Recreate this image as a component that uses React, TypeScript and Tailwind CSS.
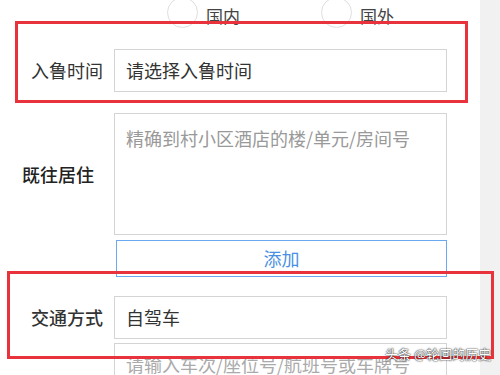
import React from "react";

const font = { fontFamily: '"Noto Sans CJK SC", "Noto Sans", sans-serif' };

export default function App() {
  return (
    <div
      className="relative flex w-[500px] h-[375px] overflow-hidden bg-white"
      style={font}
    >
      <div className="w-[480px] shrink-0 flex flex-col">
        {/* radio row */}
        <div className="shrink-0 mt-[-4px] h-[32px] flex items-center">
          <div className="ml-[167px] flex items-center">
            <span className="w-[31px] h-[31px] rounded-full border border-[#dedede]" />
            <span className="ml-[8px] text-[17px] leading-none text-[#444] mt-[6px]">国内</span>
          </div>
          <div className="ml-[81px] flex items-center">
            <span className="w-[31px] h-[31px] rounded-full border border-[#dedede]" />
            <span className="ml-[8px] text-[17px] leading-none text-[#444] mt-[6px]">国外</span>
          </div>
        </div>

        {/* 入鲁时间 */}
        <div className="shrink-0 mt-[21px] flex items-center">
          <div className="w-[114px] pr-[11px] text-right text-[18px] text-[#333]">入鲁时间</div>
          <div className="w-[333px] h-[43px] border border-[#d4d4d4] flex items-center pl-[11px] text-[18px] text-[#333]">
            请选择入鲁时间
          </div>
        </div>

        {/* 既往居住 */}
        <div className="shrink-0 mt-[21px] flex items-center">
          <div className="w-[114px] pl-[22px] text-[18px] font-medium text-[#222]">既往居住</div>
          <div className="w-[333px] h-[122px] border border-[#d4d4d4] pl-[11px] pt-[11px] text-[18px] leading-[26px] text-[#999]">
            精确到村小区酒店的楼/单元/房间号
          </div>
        </div>

        {/* 添加 */}
        <div className="shrink-0 mt-[5px] ml-[116px] w-[331px] h-[37px] border border-[#6aa8f0] flex items-center justify-center text-[18px] text-[#4a90e2]">
          添加
        </div>

        {/* 交通方式 */}
        <div className="shrink-0 mt-[19px] flex items-center">
          <div className="w-[114px] pr-[11px] text-right text-[18px] font-medium text-[#333]">交通方式</div>
          <div className="w-[333px] h-[43px] border border-[#d4d4d4] flex items-center pl-[11px] text-[18px] text-[#333]">
            自驾车
          </div>
        </div>

        <div className="shrink-0 mt-[4px] flex">
          <div className="w-[114px]" />
          <div className="w-[333px] h-[43px] border border-[#d4d4d4] flex items-center pl-[11px] text-[18px] text-[#aaa]">
            请输入车次/座位号/航班号或车牌号
          </div>
        </div>
      </div>
      <div className="flex-1 bg-[#f1f1f1]" />

      {/* red highlight boxes */}
      <div className="absolute left-[15px] top-[21px] w-[453px] h-[82px] border-[3px] border-[#e8333c]" />
      <div className="absolute left-[7px] top-[271px] w-[487px] h-[88px] border-[3px] border-[#e8333c]" />

      {/* watermark */}
      <div
        className="absolute left-[385px] top-[345px] text-[13px] leading-[18px] text-white whitespace-nowrap"
        style={{ textShadow: "0 0 2px rgba(0,0,0,0.8), 0 0 1px rgba(0,0,0,0.9)" }}
      >
        头条 @轮回的历史
      </div>
    </div>
  );
}
